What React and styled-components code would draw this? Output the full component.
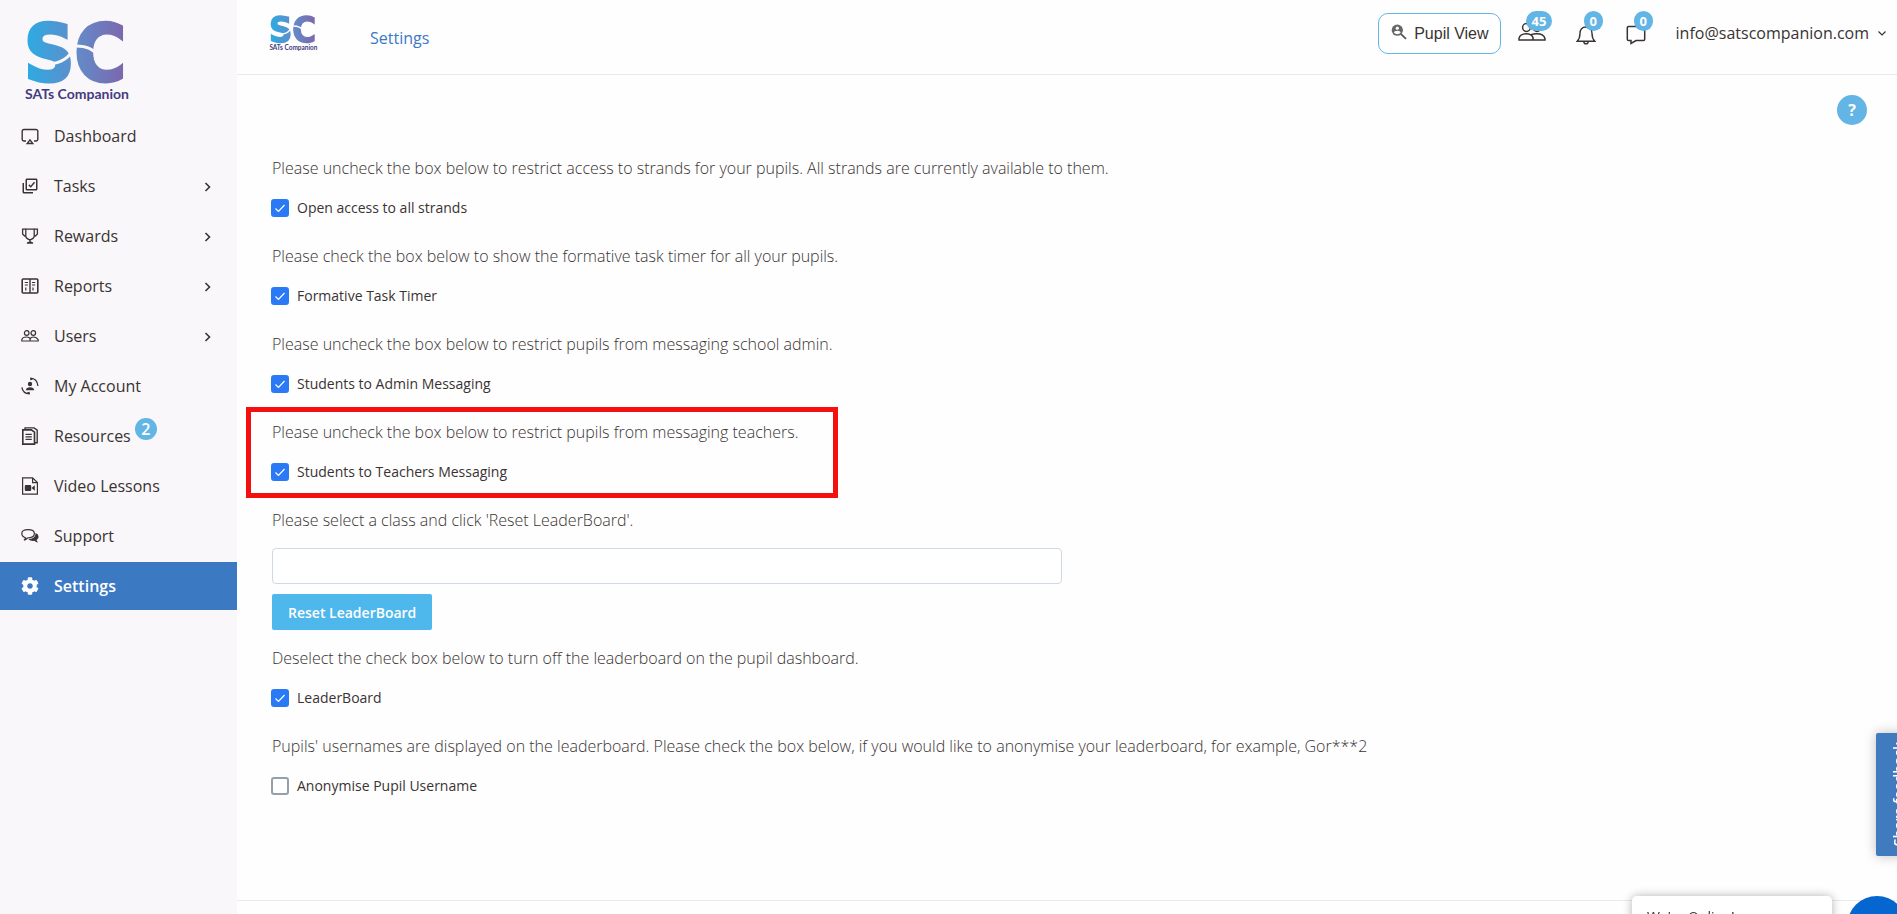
import React, { Component } from 'react';
import styled, { createGlobalStyle, css } from 'styled-components';
import { BiSelectMultiple } from 'react-icons/bi';
import { FaCog } from 'react-icons/fa';

const GlobalStyle = createGlobalStyle`
  * {
    box-sizing: border-box;
  }

  body {
    margin: 0;
    overflow: hidden;
    background-color: #fefefe;
    color: #3a3333;
    font-family: 'Open Sans', 'Liberation Sans', sans-serif;
    font-size: 16px;
    line-height: 24px;
  }

  button,
  input {
    font-family: inherit;
  }
`;

const Page = styled.div`
  display: flex;
  min-height: 100vh;
`;

const Sidebar = styled.aside`
  flex: 0 0 237px;
  background-color: #f9f7f9;
`;

const SideLogo = styled.a`
  display: block;
  height: 112px;
  padding: 18px 0 0 22px;
`;

const Nav = styled.nav`
  display: flex;
  flex-direction: column;
  gap: 2px;
`;

const NavLink = styled.a`
  display: flex;
  align-items: center;
  height: 48px;
  padding: 0 22px 0 21px;
  color: #3a3333;
  text-decoration: none;

  > svg {
    flex: none;
    width: 18px;
    height: 18px;
  }

  ${props =>
    props.$active &&
    css`
      background-color: #3b79c3;
      color: #fff;
      font-weight: 600;
    `}
`;

const NavLabel = styled.span`
  flex: 1;
  display: flex;
  align-items: center;
  padding-left: 15px;
`;

const NavBadge = styled.span`
  width: 22px;
  height: 22px;
  margin: 0 0 14px 4px;
  border-radius: 50%;
  background-color: #62b5e5;
  color: #fff;
  font-size: 16px;
  font-weight: 600;
  line-height: 22px;
  text-align: center;
`;

const Body = styled.div`
  flex: 1;
  min-width: 0;
  display: flex;
  flex-direction: column;
`;

const Header = styled.header`
  display: flex;
  align-items: flex-start;
  height: 75px;
  padding: 13px 8px 0 31px;
  border-bottom: 1px solid #eaeaea;
`;

const PageTitle = styled.h1`
  flex: 1;
  margin: 0;
  padding: 13px 0 0 52px;
  color: #3b79c3;
  font-size: 16px;
  font-weight: 400;
  line-height: 24px;
`;

const PupilButton = styled.button`
  display: flex;
  align-items: center;
  gap: 7px;
  height: 41px;
  padding: 0 11px 0 12px;
  border: 1px solid #62b5e5;
  border-radius: 10px;
  background-color: #fff;
  color: #3a3333;
  font-family: 'Liberation Sans', sans-serif;
  font-size: 16px;

  svg {
    width: 16px;
    height: 24px;
  }
`;

const Alerts = styled.div`
  display: flex;
  gap: 30px;
  padding: 8px 30px 0 17px;
`;

const AlertButton = styled.button`
  position: relative;
  display: block;
  height: 28px;
  padding: 0;
  border: 0;
  background: none;
  color: #3a3333;

  svg {
    display: block;
    height: 28px;
  }
`;

const AlertBadge = styled.span`
  position: absolute;
  top: -10px;
  left: 8px;
  min-width: 19px;
  height: 20px;
  padding: 0 6px;
  border-radius: 10px;
  background-color: #62b5e5;
  color: #fff;
  font-size: 13px;
  font-weight: 700;
  line-height: 20px;
`;

const AccountButton = styled.button`
  display: flex;
  align-items: center;
  gap: 6px;
  height: 40px;
  padding: 0;
  border: 0;
  background: none;
  color: #3a3333;
  font-size: 16px;
`;

const Main = styled.main`
  padding: 20px 30px 102px 35px;
`;

const HelpRow = styled.div`
  display: flex;
  justify-content: flex-end;
  height: 61px;
`;

const HelpButton = styled.button`
  width: 30px;
  height: 30px;
  padding: 0;
  border: 0;
  border-radius: 50%;
  background-color: #62b5e5;
  color: #fff;
  font-size: 16px;
  font-weight: 700;
`;

const Form = styled.form`
  display: flex;
  flex-direction: column;
  align-items: flex-start;
  gap: 24px;
`;

const Group = styled.div`
  position: relative;
  display: flex;
  flex-direction: column;
  align-items: flex-start;
  gap: 16px;
  max-width: 100%;
`;

const Outline = styled.div`
  position: absolute;
  top: -13px;
  right: -40px;
  bottom: -14px;
  left: -26px;
  border: 5px solid #f51010;
  pointer-events: none;
`;

const Description = styled.p`
  margin: 0;
  color: #3a3333;
  font-size: 16px;
  font-weight: 300;
  line-height: 24px;
`;

const CheckLabel = styled.label`
  display: flex;
  align-items: center;
  gap: 8px;
  height: 24px;
  margin-left: -1px;
  font-size: 14px;
`;

const CheckBox = styled.span`
  position: relative;
  width: 18px;
  height: 18px;

  input {
    appearance: none;
    display: block;
    width: 18px;
    height: 18px;
    margin: 0;
    border: 2px solid #93a1ac;
    border-radius: 3px;
    background-color: #fff;
  }

  input:checked {
    border-color: #2a7af5;
    background-color: #2a7af5;
  }

  svg {
    position: absolute;
    top: 0;
    left: 0;
    pointer-events: none;
  }
`;

const ResetGroup = styled(Group)`
  margin-bottom: -8px;
`;

const ClassField = styled.div`
  display: flex;
  flex-direction: column;
  align-items: flex-start;
  gap: 10px;
  width: 790px;
  max-width: 100%;
`;

const ClassInput = styled.input`
  width: 100%;
  height: 36px;
  padding: 0 12px;
  border: 1px solid #cfd9e3;
  border-radius: 4px;
  background-color: #fff;
  font-size: 14px;
`;

const ResetButton = styled.button`
  height: 36px;
  padding: 0 16px;
  border: 0;
  border-radius: 2px;
  background-color: #4eb7eb;
  color: #fff;
  font-size: 14px;
  font-weight: 600;
`;

const Footer = styled.footer`
  flex: 1;
  border-top: 1px solid #eaeaea;
`;

const FeedbackTab = styled.button`
  position: fixed;
  top: 733px;
  right: -10px;
  width: 31px;
  height: 123px;
  padding: 0 0 0 14px;
  border: 0;
  border-radius: 2px 0 0 2px;
  background-color: #407bbf;
  box-shadow: 0 0 12px rgba(0, 0, 0, 0.25);
  color: #fff;
  font-size: 14px;
  font-weight: 600;
  line-height: 18px;

  span {
    display: block;
    writing-mode: vertical-rl;
    transform: rotate(180deg);
  }
`;

const ChatCard = styled.div`
  position: fixed;
  right: 65px;
  bottom: -30px;
  width: 200px;
  height: 48px;
  padding: 11px 15px;
  border-radius: 5px;
  background-color: #fff;
  box-shadow: 0 0 10px rgba(0, 0, 0, 0.3);
  font-size: 14px;
  line-height: 20px;
`;

const ChatButton = styled.button`
  position: fixed;
  right: -10px;
  bottom: -42px;
  width: 60px;
  height: 60px;
  border: 0;
  border-radius: 50%;
  background-color: #0566cf;
`;

const LogoSvg = styled.svg`
  display: block;
  overflow: visible;
`;

const Logo = ({ id, width }) => (
  <LogoSvg width={width} viewBox="0 0 108 84" role="img" aria-label="SATs Companion">
    <defs>
      <linearGradient id={id} gradientUnits="userSpaceOnUse" x1="7" y1="0" x2="101" y2="0">
        <stop offset="0" stopColor="#2fa9e1" />
        <stop offset="0.5" stopColor="#628cca" />
        <stop offset="1" stopColor="#7b68ae" />
      </linearGradient>
      {/* the thin swoosh that cuts through both letters */}
      <mask id={`${id}-cut`} maskUnits="userSpaceOnUse" x="0" y="0" width="108" height="70">
        <rect width="108" height="70" fill="#fff" />
        <path d="M26 46Q46 45 52 29M54 28Q70 28 76 38" fill="none" stroke="#000" strokeWidth="3" />
      </mask>
    </defs>
    <text
      x="2"
      y="63"
      fill={`url(#${id})`}
      stroke={`url(#${id})`}
      strokeWidth="3"
      mask={`url(#${id}-cut)`}
      fontFamily="DejaVu Sans Condensed, DejaVu Sans"
      fontSize="78"
      fontWeight="700"
    >
      SC
    </text>
    <text x="3" y="81" fill="#443b80" fontFamily="Lato" fontSize="14" fontWeight="700">
      SATs Companion
    </text>
  </LogoSvg>
);

const Stroke = ({ children, ...rest }) => (
  <svg viewBox="0 0 18 18" fill="none" stroke="currentColor" strokeWidth="1.4" {...rest}>
    {children}
  </svg>
);

const DashboardIcon = () => (
  <Stroke>
    <path d="M5 14H3a1.800 1.800 0 0 1-1.800-1.800V4.300A1.800 1.800 0 0 1 3 2.500h12a1.800 1.800 0 0 1 1.800 1.800v7.900A1.800 1.800 0 0 1 15 14h-2" />
    <path d="M9 12.800l2.800 3.700H6.200z" />
  </Stroke>
);

const TrophyIcon = () => (
  <Stroke strokeWidth="1.3">
    <path d="M4.800 2.200h8.400V9q0 2.600-4.200 3.800Q4.800 11.600 4.800 9z" />
    <path d="M4.800 9H3.600L1.600 7V2.200H4.800M13.200 9h1.200l2-2V2.200H13.200M9 12.500V15" />
    <path d="M5.800 16.800q0-2.200 3.200-2.200t3.200 2.200z" fill="currentColor" stroke="none" />
  </Stroke>
);

const ReportsIcon = () => (
  <Stroke>
    <rect x="1.200" y="2" width="15.600" height="14" rx="1" strokeWidth="1.600" />
    <path d="M9 2v14" />
    <path d="M3.800 5.500H7M3.800 8H7M11 5.500h3.200M11 8h3.200M4.800 10.500v3M12 10.500v3" strokeWidth="1.200" />
  </Stroke>
);

const UsersIcon = () => (
  <Stroke strokeWidth="1.2">
    <circle cx="5.700" cy="6" r="2.300" />
    <circle cx="12.300" cy="6" r="2.300" />
    <path d="M.8 14v-1.200Q1.500 10 5.500 10T9 12.700Q9.500 10 12.500 10t4.700 2.800V14zM9 12.500V14" />
  </Stroke>
);

const AccountIcon = () => (
  <Stroke strokeWidth="1.3">
    <circle cx="9" cy="7" r="2.200" fill="currentColor" stroke="none" />
    <path d="M4.800 13.200q.4-3 4.200-3t4.200 3z" fill="currentColor" stroke="none" />
    <path d="M9.500 1.200Q16.200 1.500 16.900 9M.9 10.300Q1.800 16.500 8.500 16.800" />
    <path d="M9 .4l3 2.300-2.700.5zM9 17.600l-3.300-2.200 2.900-.7z" fill="currentColor" stroke="none" />
  </Stroke>
);

const ResourcesIcon = () => (
  <Stroke viewBox="0 0 18 20">
    <path d="M3.500 3V1h10L17 3.500v14h-2.500" strokeWidth="1.500" />
    <path d="M1 3.200h9.500L14 5.700V19H1z" strokeWidth="1.800" />
    <path d="M4 8.200h7M4 11h7M4 13.800h7" strokeWidth="1.300" />
  </Stroke>
);

const VideoIcon = () => (
  <Stroke strokeWidth="1.2">
    <path d="M1.600.8h10l4.800 4.800v11.600H1.600zM11.600.8v4.800h4.800" />
    <rect x="3.800" y="8" width="6.400" height="6" rx="1" fill="currentColor" stroke="none" />
    <path d="M10.500 11l3.300-2.800v5.600z" fill="currentColor" stroke="none" />
  </Stroke>
);

const SupportIcon = () => (
  <Stroke strokeWidth="1.2">
    <path d="M3 13.200q1.500-1.200 1.400-2.400Q.8 9.600.8 6.600.8 2.600 7.100 2.600t6.300 4q0 4.400-7 4.400-1.400 1.700-3.400 2.200z" />
    <path
      d="M14.600 6q3 1.300 3 3.800 0 2-2 3.300.3 1.500 1.700 2.300-2.500 0-4-1.600-3.600.5-6-1.500 7.300-.3 7.300-6.300z"
      fill="currentColor"
      stroke="none"
    />
  </Stroke>
);

const PupilIcon = () => (
  <svg viewBox="0 0 16 24">
    <path d="M9.800 11.800l5.200 5" stroke="#555" strokeWidth="1.8" />
    <circle cx="6.300" cy="8.200" r="5.600" fill="#666" />
    <circle cx="6.300" cy="6.200" r="1.600" fill="#fff" />
    <path d="M3 10.800q0-2 3.300-2t3.300 2q-1.200 1.400-3.300 1.400T3 10.800z" fill="#fff" />
  </svg>
);

const PeopleIcon = () => (
  <svg width="28" viewBox="0 0 28 28" fill="none" stroke="#3a3333" strokeWidth="1.5">
    <circle cx="8.500" cy="6.500" r="3.900" />
    <circle cx="19" cy="6.500" r="3.900" />
    <path d="M1 19v-1.500Q2 12.800 8.500 12.800q4.500 0 6.500 3.500V19zM13.200 13.700q2-.9 5.500-.9 7 0 8.300 4.700V19H15" />
  </svg>
);

const BellIcon = () => (
  <svg width="20" viewBox="0 0 20 28" fill="none" stroke="#3a3333" strokeWidth="1.4">
    <path d="M1.200 20.200Q4 17.500 4 12.500 4 6 10 6t6 6.500q0 5 2.800 7.700zM7.800 20.400q0 2.400 2.200 2.400t2.200-2.400" />
  </svg>
);

const MessageIcon = () => (
  <svg width="20" viewBox="0 0 20 28" fill="none" stroke="#3a3333" strokeWidth="1.5">
    <path d="M2.500 5.500h15q1.200 0 1.200 1.200v11.600q0 1.200-1.200 1.200H10L5 22.500v-3H2.500q-1.200 0-1.200-1.200V6.700q0-1.200 1.200-1.200z" />
  </svg>
);

const Chevron = ({ down }) => (
  <svg width="14" height="18" viewBox="0 0 14 18" fill="none" stroke="currentColor">
    <path d={down ? 'M3.500 7.500L7 11l3.500-3.500' : 'M6.500 6l4 4-4 4'} strokeWidth={down ? 1.2 : 1.6} />
  </svg>
);

const links = [
  { label: 'Dashboard', icon: <DashboardIcon /> },
  { label: 'Tasks', icon: <BiSelectMultiple />, more: true },
  { label: 'Rewards', icon: <TrophyIcon />, more: true },
  { label: 'Reports', icon: <ReportsIcon />, more: true },
  { label: 'Users', icon: <UsersIcon />, more: true },
  { label: 'My Account', icon: <AccountIcon /> },
  { label: 'Resources', icon: <ResourcesIcon />, count: 2 },
  { label: 'Video Lessons', icon: <VideoIcon /> },
  { label: 'Support', icon: <SupportIcon /> },
  { label: 'Settings', icon: <FaCog />, active: true }
];

const access = [
  {
    name: 'strands',
    text:
      'Please uncheck the box below to restrict access to strands for your pupils. All strands are currently available to them.',
    label: 'Open access to all strands'
  },
  {
    name: 'timer',
    text: 'Please check the box below to show the formative task timer for all your pupils.',
    label: 'Formative Task Timer'
  },
  {
    name: 'admin',
    text: 'Please uncheck the box below to restrict pupils from messaging school admin.',
    label: 'Students to Admin Messaging'
  },
  {
    name: 'teachers',
    text: 'Please uncheck the box below to restrict pupils from messaging teachers.',
    label: 'Students to Teachers Messaging',
    outlined: true
  }
];

const board = [
  {
    name: 'leaderboard',
    text: 'Deselect the check box below to turn off the leaderboard on the pupil dashboard.',
    label: 'LeaderBoard'
  },
  {
    name: 'anonymise',
    text:
      "Pupils' usernames are displayed on the leaderboard. Please check the box below, if you would like to anonymise your leaderboard, for example, Gor***2",
    label: 'Anonymise Pupil Username'
  }
];

class App extends Component {
  state = {
    strands: true,
    timer: true,
    admin: true,
    teachers: true,
    leaderboard: true,
    anonymise: false,
    className: ''
  };

  toggle = e => this.setState({ [e.target.name]: e.target.checked });

  renderOption = ({ name, text, label, outlined }) => (
    <Group key={name}>
      <Description>{text}</Description>
      <CheckLabel>
        <CheckBox>
          <input type="checkbox" name={name} checked={this.state[name]} onChange={this.toggle} />
          {this.state[name] ? (
            <svg width="18" height="18" viewBox="0 0 18 18" fill="none" stroke="#fff">
              <path d="M4.500 9.500l3 3 6-6.500" strokeWidth="1.2" />
            </svg>
          ) : null}
        </CheckBox>
        {label}
      </CheckLabel>
      {outlined ? <Outline /> : null}
    </Group>
  );

  render() {
    return (
      <Page>
        <GlobalStyle />
        <Sidebar>
          <SideLogo href="#home">
            <Logo id="side" width={108} />
          </SideLogo>
          <Nav>
            {links.map(link => (
              <NavLink key={link.label} href="#" $active={link.active}>
                {link.icon}
                <NavLabel>
                  {link.label}
                  {link.count ? <NavBadge>{link.count}</NavBadge> : null}
                </NavLabel>
                {link.more ? <Chevron /> : null}
              </NavLink>
            ))}
          </Nav>
        </Sidebar>
        <Body>
          <Header>
            <Logo id="top" width={50} />
            <PageTitle>Settings</PageTitle>
            <PupilButton type="button">
              <PupilIcon />
              Pupil View
            </PupilButton>
            <Alerts>
              <AlertButton type="button" aria-label="Users">
                <PeopleIcon />
                <AlertBadge>45</AlertBadge>
              </AlertButton>
              <AlertButton type="button" aria-label="Notifications">
                <BellIcon />
                <AlertBadge>0</AlertBadge>
              </AlertButton>
              <AlertButton type="button" aria-label="Messages">
                <MessageIcon />
                <AlertBadge>0</AlertBadge>
              </AlertButton>
            </Alerts>
            <AccountButton type="button">
              info@satscompanion.com
              <Chevron down />
            </AccountButton>
          </Header>
          <Main>
            <HelpRow>
              <HelpButton type="button">?</HelpButton>
            </HelpRow>
            <Form>
              {access.map(this.renderOption)}
              <ResetGroup>
                <Description as="label" htmlFor="class">
                  Please select a class and click 'Reset LeaderBoard'.
                </Description>
                <ClassField>
                  <ClassInput
                    id="class"
                    type="text"
                    value={this.state.className}
                    onChange={e => this.setState({ className: e.target.value })}
                  />
                  <ResetButton type="button">Reset LeaderBoard</ResetButton>
                </ClassField>
              </ResetGroup>
              {board.map(this.renderOption)}
            </Form>
          </Main>
          <Footer />
        </Body>
        <FeedbackTab type="button">
          <span>Share feedback</span>
        </FeedbackTab>
        <ChatCard>We're Online!</ChatCard>
        <ChatButton type="button" aria-label="Open chat" />
      </Page>
    );
  }
}

export default App;
